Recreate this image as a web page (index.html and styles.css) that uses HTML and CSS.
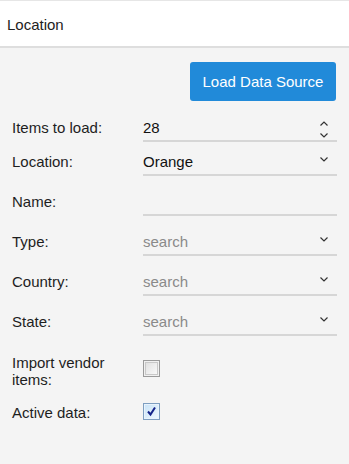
FILE: index.html
```html
<!DOCTYPE html>
<html>
<head>
<meta charset="utf-8">
<link rel="stylesheet" href="styles.css">
</head>
<body>
<div class="header">Location</div>
<div class="actions">
  <button class="btn-primary">Load Data Source</button>
</div>
<div class="form">
  <div class="row row-tight">
    <label class="label">Items to load:</label>
    <div class="field">
      <span class="value">28</span>
      <span class="spin">
        <svg width="8" height="5" viewBox="0 0 8 5"><path d="M0.5 4.5 L4 1 L7.5 4.5" fill="none" stroke="#333" stroke-width="1.2"/></svg>
        <svg width="8" height="5" viewBox="0 0 8 5"><path d="M0.5 0.5 L4 4 L7.5 0.5" fill="none" stroke="#333" stroke-width="1.2"/></svg>
      </span>
    </div>
  </div>
  <div class="row">
    <label class="label">Location:</label>
    <div class="field">
      <span class="value">Orange</span>
      <svg class="chev" width="8" height="5" viewBox="0 0 8 5"><path d="M0.5 0.5 L4 4 L7.5 0.5" fill="none" stroke="#333" stroke-width="1.2"/></svg>
    </div>
  </div>
  <div class="row">
    <label class="label">Name:</label>
    <div class="field"><span class="value"></span></div>
  </div>
  <div class="row">
    <label class="label">Type:</label>
    <div class="field">
      <span class="value placeholder">search</span>
      <svg class="chev" width="8" height="5" viewBox="0 0 8 5"><path d="M0.5 0.5 L4 4 L7.5 0.5" fill="none" stroke="#333" stroke-width="1.2"/></svg>
    </div>
  </div>
  <div class="row">
    <label class="label">Country:</label>
    <div class="field">
      <span class="value placeholder">search</span>
      <svg class="chev" width="8" height="5" viewBox="0 0 8 5"><path d="M0.5 0.5 L4 4 L7.5 0.5" fill="none" stroke="#333" stroke-width="1.2"/></svg>
    </div>
  </div>
  <div class="row">
    <label class="label">State:</label>
    <div class="field">
      <span class="value placeholder">search</span>
      <svg class="chev" width="8" height="5" viewBox="0 0 8 5"><path d="M0.5 0.5 L4 4 L7.5 0.5" fill="none" stroke="#333" stroke-width="1.2"/></svg>
    </div>
  </div>
  <div class="row check-row first-check">
    <label class="label wrap">Import vendor items:</label>
    <span class="checkbox"></span>
  </div>
  <div class="row check-row last-check">
    <label class="label wrap">Active data:</label>
    <span class="checkbox checked">
      <svg width="11" height="11" viewBox="0 0 11 11"><path d="M2 5.5 L4.5 8.5 L9 1.5" fill="none" stroke="#15238a" stroke-width="2"/></svg>
    </span>
  </div>
</div>
</body>
</html>
```
FILE: styles.css
```css
* { box-sizing: border-box; }
html, body {
  margin: 0;
  padding: 0;
  background: #f4f4f4;
  font-family: "Liberation Sans", Arial, sans-serif;
  color: #1e1e1e;
}
.header {
  height: 48px;
  background: #fff;
  border-top: 1px solid #e6e6e6;
  border-bottom: 2px solid #dedede;
  font-size: 15px;
  line-height: 47px;
  padding-left: 7px;
  color: #222;
}
.actions {
  display: flex;
  justify-content: flex-end;
  padding: 14px 13px 0 0;
}
.btn-primary {
  width: 146px;
  height: 39px;
  border: none;
  border-radius: 3px;
  background: #218ad9;
  color: #fff;
  font-family: "Liberation Sans", Arial, sans-serif;
  font-size: 15px;
  padding: 0;
}
.form {
  display: flex;
  flex-direction: column;
  gap: 14px;
  padding: 15px 12px 0 12px;
}
.row {
  display: flex;
  align-items: flex-end;
}
.row-tight { margin-bottom: -6px; }
.label {
  width: 131px;
  flex: none;
  font-size: 15px;
  line-height: 24px;
  padding-bottom: 2px;
}
.field {
  width: 194px;
  height: 26px;
  border-bottom: 2px solid #d6d6d6;
  display: flex;
  align-items: flex-start;
  justify-content: space-between;
  font-size: 15px;
  line-height: 24px;
  padding-right: 9px;
}
.value { color: #111; }
.placeholder { color: #8a8a8a; }
.chev { margin-top: 7px; }
.spin {
  display: flex;
  flex-direction: column;
  gap: 7px;
  margin-top: 5px;
}
.spin svg { display: block; }
.check-row { align-items: flex-start; }
.first-check { margin-top: 4px; }
.last-check { margin-top: 2px; }
.check-row .label {
  line-height: 17px;
  padding-bottom: 0;
}
.wrap { padding-right: 20px; }
.checkbox {
  width: 17px;
  height: 17px;
  flex: none;
  border: 1px solid #9a9a9a;
  background: linear-gradient(135deg, #dcdcdc, #fdfdfd);
  box-shadow: inset 0 0 0 1px #f0f0f0, inset 0 0 0 2px #c8c8c8;
  margin-top: 6px;
  display: flex;
  align-items: center;
  justify-content: center;
}
.checkbox.checked {
  margin-top: -1px;
  border-color: #7e9ec0;
  background: linear-gradient(135deg, #c9e3f7, #eef7fe);
  box-shadow: inset 0 0 0 1px #e8f3fd;
}
.checkbox svg { display: block; }
```
